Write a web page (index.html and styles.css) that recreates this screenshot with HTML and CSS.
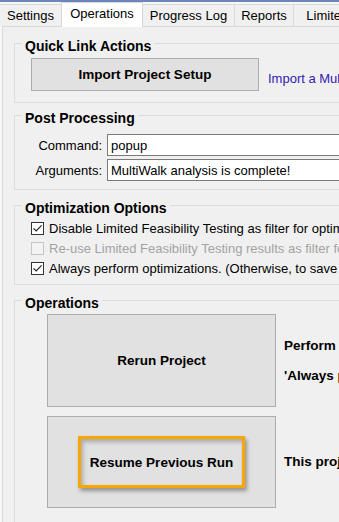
FILE: index.html
```html
<!DOCTYPE html>
<html lang="en">
<head>
    <meta charset="UTF-8">
    <meta name="viewport" content="width=device-width, initial-scale=1.0">
    <title>MultiWalk - Operations</title>
    <link rel="stylesheet" href="styles.css">
</head>
<body>

<div class="titlebar"></div>

<div class="tabs">
    <div class="tab tab-settings">Settings</div>
    <div class="tab tab-active tab-operations">Operations</div>
    <div class="tab tab-log">Progress Log</div>
    <div class="tab tab-reports">Reports</div>
    <div class="tab tab-limited">Limited Feasibility</div>
</div>

<div class="panel">

    <div class="group group-quick">
        <div class="group-title">Quick Link Actions</div>
        <div class="quick-row">
            <button class="btn">Import Project Setup</button>
            <a class="link" href="#">Import a MultiWalk project setup from file</a>
        </div>
    </div>

    <div class="group group-post">
        <div class="group-title">Post Processing</div>
        <div class="fields">
            <label class="field-label" for="command">Command:</label>
            <input class="field-input" type="text" id="command" value="popup">
            <label class="field-label" for="arguments">Arguments:</label>
            <input class="field-input" type="text" id="arguments" value="MultiWalk analysis is complete!">
        </div>
    </div>

    <div class="group group-options">
        <div class="group-title">Optimization Options</div>
        <div class="checks">
            <div class="check-row">
                <span class="check"><svg viewBox="0 0 11 11" width="11" height="11"><polyline points="1.5,5.3 4.2,8 9.6,2.4" fill="none" stroke="#222" stroke-width="1.2"/></svg></span>
                Disable Limited Feasibility Testing as filter for optimization
            </div>
            <div class="check-row disabled">
                <span class="check"></span>
                Re-use Limited Feasibility Testing results as filter for optimization
            </div>
            <div class="check-row">
                <span class="check"><svg viewBox="0 0 11 11" width="11" height="11"><polyline points="1.5,5.3 4.2,8 9.6,2.4" fill="none" stroke="#222" stroke-width="1.2"/></svg></span>
                Always perform optimizations. (Otherwise, to save time, skip unchanged.)
            </div>
        </div>
    </div>

    <div class="group group-operations">
        <div class="group-title">Operations</div>
        <div class="ops">
            <button class="btn btn-big">Rerun Project</button>
            <div class="op-desc">Perform a complete rerun of the project.<br>'Always perform optimizations' is respected.</div>
            <button class="btn btn-big btn-resume"><span class="highlight">Resume Previous Run</span></button>
            <div class="op-desc">This project can be resumed from where it stopped.</div>
        </div>
    </div>

</div>

</body>
</html>
```

FILE: styles.css
```css
html, body {
    overflow: hidden;
}
body {
    margin: 0;
    width: 339px;
    height: 522px;
    background-color: #f7f7f7;
    font-family: "Liberation Sans", Arial, sans-serif;
    font-size: 13px;
    color: #000;
}
.titlebar {
    height: 2px;
    background-color: #6a86bb;
}
.tabs {
    display: flex;
    align-items: flex-end;
    height: 24px;
    white-space: nowrap;
}
.tab {
    flex-shrink: 0;
    box-sizing: border-box;
    height: 22px;
    padding-top: 3px;
    line-height: 15px;
    text-align: center;
    background-color: #f0f0f0;
    border: 1px solid #d9d9d9;
    border-bottom: none;
    margin-left: -1px;
}
.tab:first-child {
    margin-left: 0;
    border-left: none;
}
.tab-active {
    height: 25px;
    margin-bottom: -1px;
    background-color: #fff;
    position: relative;
    z-index: 1;
}
.tab-settings { width: 62px; }
.tab-operations { width: 82px; }
.tab-log { width: 93px; }
.tab-reports { width: 60px; }
.tab-limited { width: 130px; }

.panel {
    width: 420px;
    height: 600px;
    margin-left: 2px;
    padding: 16px 0 0 11px;
    background-color: #f0f0f0;
    border-top: 1px solid #d9d9d9;
    border-left: 1px solid #d9d9d9;
}
.group {
    border: 1px solid #dcdcdc;
}
.group-post { margin-top: 12px; }
.group-options { margin-top: 15px; }
.group-operations { margin-top: 15px; padding-bottom: 20px; }
.group-title {
    width: fit-content;
    margin: -6px 0 0 7px;
    padding: 0 3px;
    background-color: #f0f0f0;
    font-size: 14px;
    font-weight: bold;
    line-height: 16px;
}

.btn {
    box-sizing: border-box;
    flex-shrink: 0;
    width: 228px;
    height: 33px;
    padding: 0;
    background-color: #e1e1e1;
    border: 1px solid #adadad;
    border-radius: 0;
    color: #000;
    font-family: "Liberation Sans", Arial, sans-serif;
    font-size: 13.5px;
    font-weight: bold;
}
.quick-row {
    display: flex;
    align-items: center;
    margin-top: 4px;
    padding: 0 0 11px 16px;
}
.link {
    margin: 7px 0 0 9px;
    color: #3020b0;
    text-decoration: none;
    white-space: nowrap;
}

.fields {
    display: grid;
    grid-template-columns: 87px 1fr;
    column-gap: 5px;
    row-gap: 3px;
    align-items: center;
    margin-top: 8px;
    padding-bottom: 8px;
}
.field-label {
    text-align: right;
}
.field-input {
    box-sizing: border-box;
    width: 100%;
    height: 22px;
    margin: 0;
    padding: 0 3px;
    border: 1px solid #7a7a7a;
    border-radius: 0;
    background-color: #fff;
    color: #000;
    font-family: "Liberation Sans", Arial, sans-serif;
    font-size: 13px;
}

.checks {
    margin-top: 2px;
    padding-bottom: 6px;
}
.check-row {
    display: flex;
    align-items: center;
    height: 20px;
    padding-left: 16px;
    white-space: nowrap;
}
.check {
    box-sizing: border-box;
    flex-shrink: 0;
    display: flex;
    width: 13px;
    height: 13px;
    margin-right: 5px;
    border: 1px solid #333;
    background-color: #fff;
}
.check-row.disabled {
    color: #a3a3a3;
}
.check-row.disabled .check {
    border-color: #c6c6c6;
    background-color: #f3f3f3;
}

.ops {
    display: grid;
    grid-template-columns: 229px auto;
    column-gap: 8px;
    row-gap: 9px;
    align-items: center;
    margin-top: 3px;
    padding-left: 32px;
}
.btn-big {
    width: 229px;
    height: 93px;
}
.btn-resume {
    height: 92px;
    display: flex;
    align-items: center;
    justify-content: center;
}
.highlight {
    box-sizing: border-box;
    display: flex;
    align-items: center;
    justify-content: center;
    width: 167px;
    height: 52px;
    border: 3px solid #f8a700;
    box-shadow: 2px 3px 4px rgba(0, 0, 0, 0.35), inset 2px 3px 4px rgba(0, 0, 0, 0.25);
}
.op-desc {
    font-size: 13.5px;
    font-weight: bold;
    line-height: 30px;
    white-space: nowrap;
}
```
